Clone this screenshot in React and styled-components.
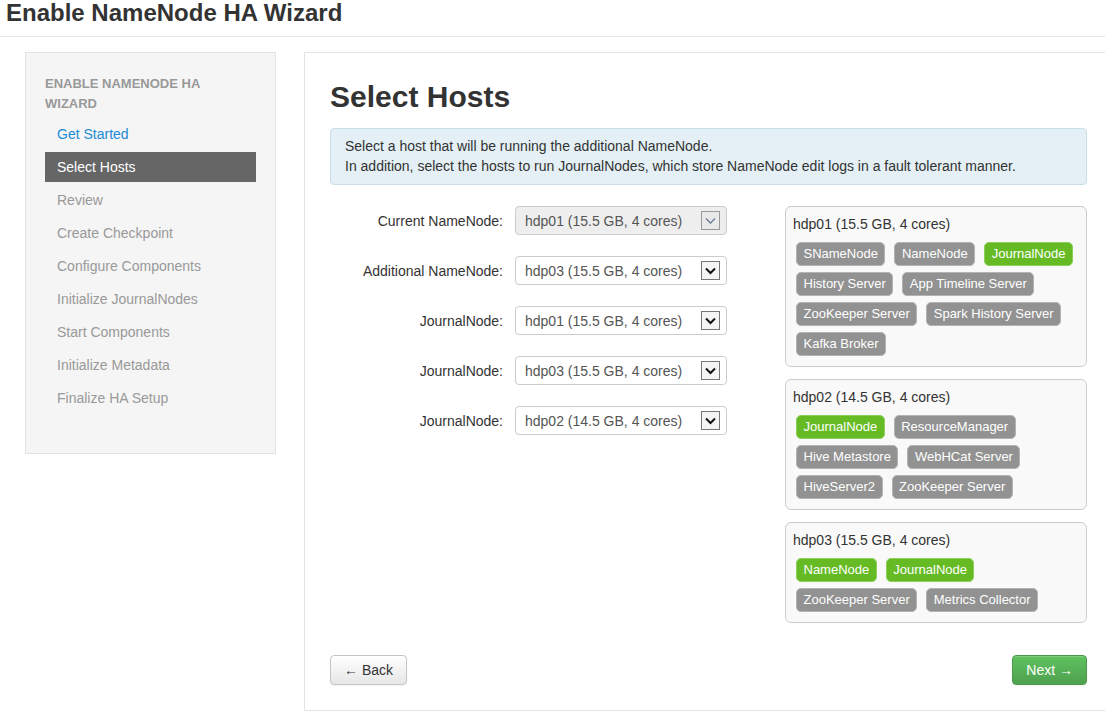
import React from "react";
import styled, { createGlobalStyle } from "styled-components";

const Global = createGlobalStyle`
  html, body { margin: 0; padding: 0; background: #fff; }
  body { font-family: "Liberation Sans", Arial, sans-serif; color: #333; font-size: 14px; overflow: hidden; }
  * { box-sizing: border-box; }
`;

const Page = styled.div`
  width: 1105px;
  height: 716px;
  overflow: hidden;
`;

const Header = styled.div`
  height: 37px;
  border-bottom: 1px solid #e5e5e5;
  padding-left: 6px;
`;

const Title = styled.h1`
  margin: 0;
  font-size: 24px;
  line-height: 26px;
  font-weight: bold;
  color: #333;
`;

const Body = styled.div`
  display: flex;
  align-items: flex-start;
  padding: 15px 0 0 25px;
  gap: 28px;
`;

const Sidebar = styled.div`
  width: 251px;
  flex: none;
  background: #f5f5f5;
  border: 1px solid #e3e3e3;
  padding: 21px 19px 37px 19px;
`;

const NavHeader = styled.div`
  max-width: 175px;
  font-size: 13px;
  font-weight: bold;
  line-height: 20px;
  color: #999;
  text-transform: uppercase;
  margin-bottom: 5px;
`;

const NavItem = styled.div`
  height: 30px;
  line-height: 30px;
  padding: 0 12px;
  margin-bottom: 3px;
  font-size: 14px;
  color: ${(p) => (p.$state === "active" ? "#fff" : p.$state === "done" ? "#1b8bd6" : "#999")};
  background: ${(p) => (p.$state === "active" ? "#666" : "transparent")};
`;

const Panel = styled.div`
  flex: 1;
  height: 659px;
  border: 1px solid #e3e3e3;
  border-right: none;
  padding: 26px 18px 0 25px;
`;

const Heading = styled.h2`
  margin: 0 0 13px 0;
  font-size: 30px;
  line-height: 36px;
  font-weight: bold;
  color: #333;
`;

const Alert = styled.div`
  background: #e4f0f5;
  border: 1px solid #c9dfe8;
  border-radius: 4px;
  padding: 7px 14px 8px 14px;
  line-height: 20px;
  color: #333;
`;

const Grid = styled.div`
  display: grid;
  grid-template-columns: 1fr 302px;
  gap: 25px;
  margin-top: 21px;
`;

const FormCol = styled.div`
  display: flex;
  flex-direction: column;
  gap: 21px;
`;

const FormRow = styled.div`
  display: flex;
  align-items: center;
  gap: 12px;
`;

const Label = styled.label`
  width: 173px;
  text-align: right;
  font-size: 14px;
  color: #333;
`;

const Select = styled.div`
  width: 212px;
  height: 29px;
  border: 1px solid #ccc;
  border-radius: 4px;
  background: ${(p) => (p.$disabled ? "#eee" : "#fff")};
  display: flex;
  align-items: center;
  justify-content: space-between;
  padding: 0 6px 0 9px;
  color: #555;
  font-size: 14px;
`;

const ArrowBox = styled.span`
  width: 19px;
  height: 19px;
  border: 1px solid ${(p) => (p.$disabled ? "#999" : "#777")};
  background: ${(p) => (p.$disabled ? "#e9e9e9" : "#f4f4f4")};
  display: flex;
  align-items: center;
  justify-content: center;
`;

const HostCol = styled.div`
  display: flex;
  flex-direction: column;
  gap: 12px;
`;

const HostBox = styled.div`
  border: 1px solid #ccc;
  border-radius: 6px;
  background: #f9f9f9;
  padding: 7px 7px 4px 7px;
`;

const HostTitle = styled.div`
  line-height: 20px;
  font-size: 14px;
  color: #333;
  margin-bottom: 8px;
`;

const Badges = styled.div`
  display: flex;
  flex-wrap: wrap;
  column-gap: 9px;
  row-gap: 6px;
  padding-left: 3px;
  margin-bottom: 6px;
`;

const Badge = styled.span`
  height: 24px;
  line-height: 22px;
  padding: 0 6.5px;
  border-radius: 5px;
  font-size: 13px;
  color: #fff;
  white-space: nowrap;
  background: ${(p) => (p.$green ? "#66bb25" : "#929292")};
  border: 1px solid ${(p) => (p.$green ? "#8ccf5c" : "#b3b3b3")};
`;

const Actions = styled.div`
  display: flex;
  justify-content: space-between;
  margin-top: 32px;
`;

const Button = styled.button`
  height: 30px;
  padding: 0 13px;
  font-family: "Liberation Sans", Arial, sans-serif;
  font-size: 14px;
  border-radius: 4px;
  cursor: pointer;
  color: ${(p) => (p.$primary ? "#fff" : "#333")};
  border: 1px solid ${(p) => (p.$primary ? "#4a9a4a" : "#c5c5c5")};
  background: ${(p) =>
    p.$primary
      ? "linear-gradient(#5fc25f, #4fa14f)"
      : "linear-gradient(#ffffff, #e6e6e6)"};
  box-shadow: inset 0 1px 0 rgba(255,255,255,0.2), 0 1px 2px rgba(0,0,0,0.05);
`;

const Chevron = ({ disabled }) => (
  <svg width="11" height="8" viewBox="0 0 11 8">
    <polyline
      points="1,1.5 5.5,6 10,1.5"
      fill="none"
      stroke={disabled ? "#6a7a95" : "#111"}
      strokeWidth={disabled ? 1.3 : 2}
    />
  </svg>
);

const steps = [
  ["Get Started", "done"],
  ["Select Hosts", "active"],
  ["Review", ""],
  ["Create Checkpoint", ""],
  ["Configure Components", ""],
  ["Initialize JournalNodes", ""],
  ["Start Components", ""],
  ["Initialize Metadata", ""],
  ["Finalize HA Setup", ""],
];

const rows = [
  ["Current NameNode:", "hdp01 (15.5 GB, 4 cores)", true],
  ["Additional NameNode:", "hdp03 (15.5 GB, 4 cores)", false],
  ["JournalNode:", "hdp01 (15.5 GB, 4 cores)", false],
  ["JournalNode:", "hdp03 (15.5 GB, 4 cores)", false],
  ["JournalNode:", "hdp02 (14.5 GB, 4 cores)", false],
];

const hosts = [
  {
    name: "hdp01 (15.5 GB, 4 cores)",
    comps: [
      ["SNameNode"], ["NameNode"], ["JournalNode", true], ["History Server"],
      ["App Timeline Server"], ["ZooKeeper Server"], ["Spark History Server"], ["Kafka Broker"],
    ],
  },
  {
    name: "hdp02 (14.5 GB, 4 cores)",
    comps: [
      ["JournalNode", true], ["ResourceManager"], ["Hive Metastore"], ["WebHCat Server"],
      ["HiveServer2"], ["ZooKeeper Server"],
    ],
  },
  {
    name: "hdp03 (15.5 GB, 4 cores)",
    comps: [["NameNode", true], ["JournalNode", true], ["ZooKeeper Server"], ["Metrics Collector"]],
  },
];

export default function App() {
  return (
    <Page>
      <Global />
      <Header>
        <Title>Enable NameNode HA Wizard</Title>
      </Header>
      <Body>
        <Sidebar>
          <NavHeader>Enable NameNode HA Wizard</NavHeader>
          {steps.map(([s, st]) => (
            <NavItem key={s} $state={st}>{s}</NavItem>
          ))}
        </Sidebar>
        <Panel>
          <Heading>Select Hosts</Heading>
          <Alert>
            Select a host that will be running the additional NameNode.
            <br />
            In addition, select the hosts to run JournalNodes, which store NameNode edit logs in a fault tolerant manner.
          </Alert>
          <Grid>
            <FormCol>
              {rows.map(([l, v, d], i) => (
                <FormRow key={i}>
                  <Label>{l}</Label>
                  <Select $disabled={d}>
                    <span>{v}</span>
                    <ArrowBox $disabled={d}>
                      <Chevron disabled={d} />
                    </ArrowBox>
                  </Select>
                </FormRow>
              ))}
            </FormCol>
            <HostCol>
              {hosts.map((h) => (
                <HostBox key={h.name}>
                  <HostTitle>{h.name}</HostTitle>
                  <Badges>
                    {h.comps.map(([c, g], i) => (
                      <Badge key={i} $green={g}>{c}</Badge>
                    ))}
                  </Badges>
                </HostBox>
              ))}
            </HostCol>
          </Grid>
          <Actions>
            <Button>← Back</Button>
            <Button $primary>Next →</Button>
          </Actions>
        </Panel>
      </Body>
    </Page>
  );
}
